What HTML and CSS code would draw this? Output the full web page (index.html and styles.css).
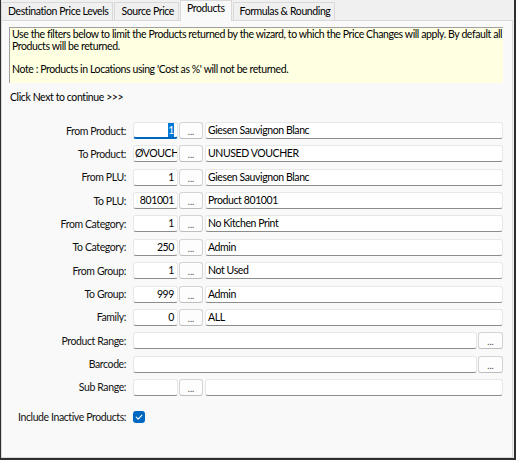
FILE: index.html
```html
<!DOCTYPE html>
<html>
<head>
<meta charset="utf-8">
<link rel="stylesheet" href="styles.css">
</head>
<body>
<div class="window">
  <div class="tabs">
    <div class="tab">Destination Price Levels</div>
    <div class="tab">Source Price</div>
    <div class="tab active">Products</div>
    <div class="tab">Formulas &amp; Rounding</div>
  </div>
  <div class="panel">
    <div class="note">Use the filters below to limit the Products returned by the wizard, to which the Price Changes will apply. By default all<br>Products will be returned.<br><br>Note : Products in Locations using 'Cost as %' will not be returned.</div>
    <div class="next">Click Next to continue &gt;&gt;&gt;</div>
    <div class="form">
      <div class="row"><div class="label">From Product:</div><div class="field code focused"><span class="sel">1</span></div><div class="btn">...</div><div class="field desc">Giesen Sauvignon Blanc</div></div>
      <div class="row"><div class="label">To Product:</div><div class="field code left">ØVOUCH</div><div class="btn">...</div><div class="field desc">UNUSED VOUCHER</div></div>
      <div class="row"><div class="label">From PLU:</div><div class="field code">1</div><div class="btn">...</div><div class="field desc">Giesen Sauvignon Blanc</div></div>
      <div class="row"><div class="label">To PLU:</div><div class="field code">801001</div><div class="btn">...</div><div class="field desc">Product 801001</div></div>
      <div class="row"><div class="label">From Category:</div><div class="field code">1</div><div class="btn">...</div><div class="field desc">No Kitchen Print</div></div>
      <div class="row"><div class="label">To Category:</div><div class="field code">250</div><div class="btn">...</div><div class="field desc">Admin</div></div>
      <div class="row"><div class="label">From Group:</div><div class="field code">1</div><div class="btn">...</div><div class="field desc">Not Used</div></div>
      <div class="row"><div class="label">To Group:</div><div class="field code">999</div><div class="btn">...</div><div class="field desc">Admin</div></div>
      <div class="row"><div class="label">Family:</div><div class="field code">0</div><div class="btn">...</div><div class="field desc">ALL</div></div>
      <div class="row"><div class="label">Product Range:</div><div class="field wide"></div><div class="btn btn-end">...</div></div>
      <div class="row"><div class="label">Barcode:</div><div class="field wide"></div><div class="btn btn-end">...</div></div>
      <div class="row"><div class="label">Sub Range:</div><div class="field code"></div><div class="btn">...</div><div class="field desc"></div></div>
      <div class="row check-row"><div class="label">Include Inactive Products:</div>
        <div class="checkbox"><svg width="12" height="12" viewBox="0 0 12 12"><path d="M3.2 6.2 L5.2 8.1 L8.9 4.1" fill="none" stroke="#fff" stroke-width="1.1" stroke-linecap="round" stroke-linejoin="round"/></svg></div>
      </div>
    </div>
  </div>
</div>
</body>
</html>
```
FILE: styles.css
```css
* { box-sizing: border-box; }
html, body { margin: 0; padding: 0; }
body {
  font-family: Lato, "Liberation Sans", sans-serif;
  font-size: 10.5px;
  letter-spacing: -0.4px;
  color: #000;
  background: #f0f0f0;
}
.window {
  width: 516px;
  height: 460px;
  background: #f0f0f0;
  border-left: 1px solid #2e2e2e;
  border-right: 2px solid #2e2e2e;
  border-bottom: 2px solid #2e2e2e;
  display: flex;
  flex-direction: column;
}
.tabs {
  height: 21px;
  display: flex;
  align-items: flex-end;
  gap: 1px;
  padding-left: 0;
  margin-bottom: -1px;
}
.tab {
  height: 19px;
  padding: 2px 4px 0 6px;
  border: 1px solid #d9d9d9;
  border-bottom: none;
  background: #f0f0f0;
  white-space: nowrap;
  line-height: 13px;
}
.active {
  height: 21px;
  padding-top: 1px;
  padding-left: 6px;
  padding-right: 6px;
  background: #f9f9f9;
  position: relative;
  z-index: 1;
}
.panel {
  flex: 1;
  margin-right: 1px;
  background: #f9f9f9;
  border: 1px solid #d9d9d9;
  padding: 6px 9px 0 7px;
}
.note {
  height: 56px;
  background: #ffffe1;
  border-top: 1px solid #a0a0a0;
  border-left: 1px solid #a0a0a0;
  padding: 1px 0 0 2px;
  line-height: 11.6px;
  white-space: nowrap;
  overflow: hidden;
}
.next {
  margin-top: 8px;
  padding-left: 1px;
  line-height: 13px;
}
.form {
  margin-top: 18px;
  display: flex;
  flex-direction: column;
  gap: 6.36px;
}
.row {
  display: flex;
  align-items: center;
  height: 17px;
}
.label {
  width: 117px;
  margin-right: 7px;
  text-align: right;
  white-space: nowrap;
  color: #111;
}
.field {
  height: 17px;
  background: #fff;
  border: 1px solid #e8e8e8;
  border-bottom: 1px solid #8c8c8c;
  border-radius: 3px;
  padding: 0 2px;
  line-height: 15px;
  white-space: nowrap;
  overflow: hidden;
}
.code {
  width: 45px;
  text-align: right;
  padding-right: 3px;
}
.left {
  text-align: left;
  padding-left: 1px;
}
.focused {
  border-bottom: 2px solid #0067c0;
  line-height: 14px;
}
.sel {
  background: #0078d7;
  color: #fff;
  padding: 1px 0;
}
.desc {
  flex: 1;
  margin-left: 2px;
}
.wide {
  flex: 1;
}
.btn {
  width: 24px;
  height: 17px;
  margin-left: 1px;
  border: 1px solid #d4d4d4;
  border-bottom-color: #bdbdbd;
  border-radius: 3px;
  background: #fdfdfd;
  color: #444;
  font-size: 9px;
  letter-spacing: 0;
  text-align: center;
  line-height: 17px;
}
.btn-end {
  width: 25px;
}
.check-row {
  margin-top: 8px;
  height: 13px;
}
.checkbox {
  width: 12px;
  height: 12px;
  background: #0067c0;
  border-radius: 3px;
  display: flex;
}
```
